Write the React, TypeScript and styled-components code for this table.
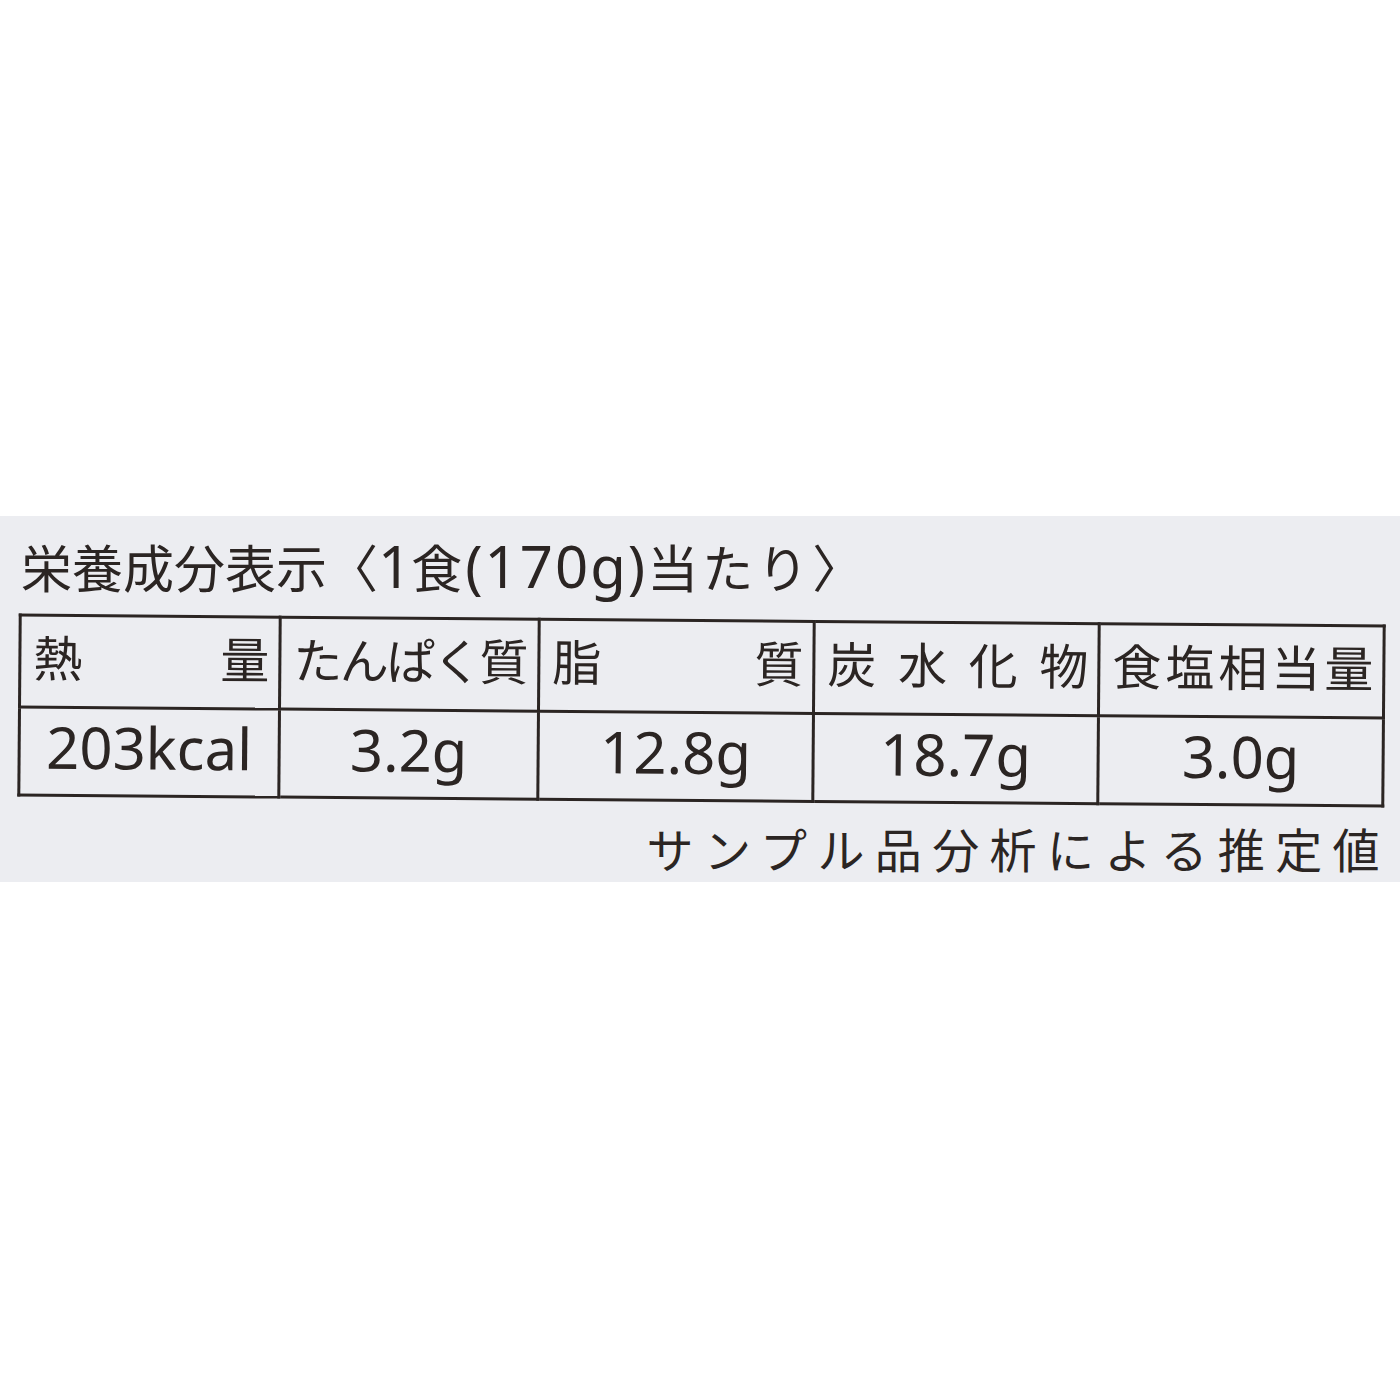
import { ReactElement } from 'react';
import styled, { createGlobalStyle } from 'styled-components';

const GlobalStyle = createGlobalStyle`
  html, body {
    margin: 0;
    padding: 0;
    background: #ffffff;
  }
  body {
    font-family: "Noto Sans", "Noto Sans CJK JP", sans-serif;
    color: #2b2523;
  }
`;

const Page = styled.div`
  width: 1400px;
  height: 1400px;
  padding-top: 516px;
  box-sizing: border-box;
  background: #ffffff;
`;

const Band = styled.section`
  height: 366px;
  box-sizing: border-box;
  padding: 24px 0 0;
  display: flex;
  flex-direction: column;
  background: #ecedf1;
`;

const Title = styled.h1`
  margin: 0;
  padding-left: 21px;
  font-family: "Noto Sans CJK JP", sans-serif;
  font-size: 51px;
  font-weight: 400;
  line-height: 52px;
  white-space: nowrap;
`;

// digits and brackets in the title are set a size up, as on the label
const Latin = styled.span<{ $gap?: number }>`
  font-family: "Noto Sans", sans-serif;
  font-size: 58px;
  letter-spacing: ${({ $gap }) => $gap ?? 0}px;
  margin-left: ${({ $gap }) => ($gap ? 3 : 0)}px;
`;

const Tail = styled.span`
  letter-spacing: 4px;
`;

const Table = styled.table`
  margin: 27px 0 0 18px;
  width: 1364px;
  table-layout: fixed;
  border-collapse: collapse;
  border: 3px solid #2b2523;
  transform: rotate(0.46deg);
`;

const HeadCell = styled.th`
  height: 92px;
  box-sizing: border-box;
  padding: 0 12px 12px;
  border: 3px solid #2b2523;
  font-family: "Noto Sans CJK JP", sans-serif;
  font-size: 49px;
  font-weight: 400;
  line-height: 1;
  letter-spacing: -3px;
  text-align: justify;
  text-align-last: justify;
`;

const ValueCell = styled.td`
  height: 88px;
  box-sizing: border-box;
  padding: 0 0 10px;
  border: 3px solid #2b2523;
  font-family: "Noto Sans", "Noto Sans CJK JP", sans-serif;
  font-size: 58px;
  font-weight: 400;
  line-height: 1;
  text-align: center;
`;

const Footer = styled.p`
  margin: 22px 0 0;
  padding-right: 10px;
  font-family: "Noto Sans CJK JP", sans-serif;
  font-size: 47px;
  line-height: 47px;
  letter-spacing: 10.4px;
  text-align: right;
  white-space: nowrap;
`;

interface Nutrient {
  label: string;
  value: string;
  width: number;
}

const nutrients: Nutrient[] = [
  { label: '熱量', value: '203kcal', width: 260 },
  { label: 'たんぱく質', value: '3.2g', width: 259 },
  { label: '脂質', value: '12.8g', width: 275 },
  { label: '炭水化物', value: '18.7g', width: 285 },
  { label: '食塩相当量', value: '3.0g', width: 285 },
];

export default function App(): ReactElement {
  return (
    <Page>
      <GlobalStyle />
      <Band>
        <Title>
          栄養成分表示〈<Latin>1</Latin>食<Latin $gap={2}>(170g)</Latin>
          <Tail>当たり〉</Tail>
        </Title>
        <Table>
          <colgroup>
            {nutrients.map((n) => (
              <col key={n.label} style={{ width: n.width }} />
            ))}
          </colgroup>
          <thead>
            <tr>
              {nutrients.map((n) => (
                <HeadCell key={n.label}>{n.label}</HeadCell>
              ))}
            </tr>
          </thead>
          <tbody>
            <tr>
              {nutrients.map((n) => (
                <ValueCell key={n.label}>{n.value}</ValueCell>
              ))}
            </tr>
          </tbody>
        </Table>
        <Footer>サンプル品分析による推定値</Footer>
      </Band>
    </Page>
  );
}
